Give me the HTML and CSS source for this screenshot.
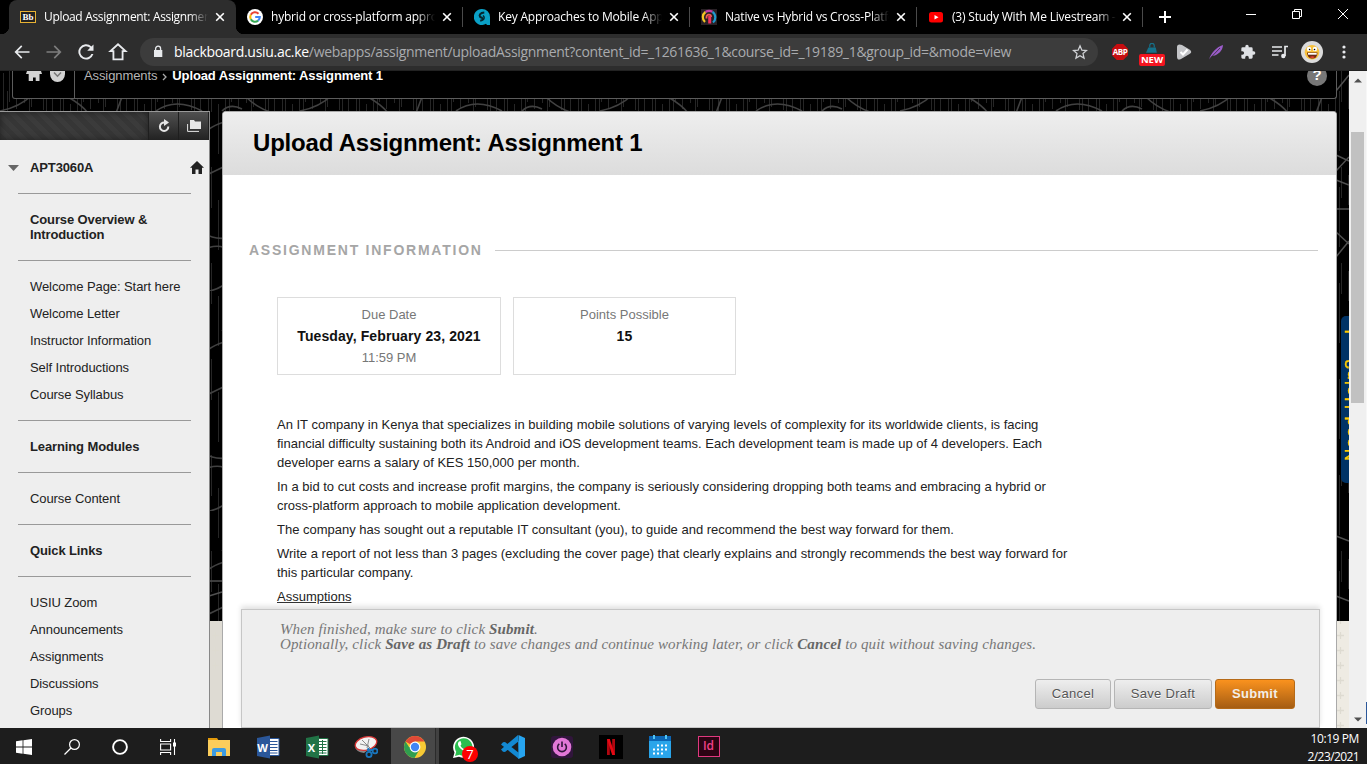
FILE: index.html
```html
<!DOCTYPE html>
<html lang="en">
<head>
<meta charset="utf-8">
<title>Upload Assignment: Assignment 1</title>
<link rel="stylesheet" href="styles.css">
</head>
<body>
<div class="tabstrip">
  <div class="tab active">
    <span class="bb">Bb</span><span class="tab-title t1">Upload Assignment: Assignment 1</span>
    <svg class="x" viewBox="0 0 10 10"><path d="M1.2 1.2l7.6 7.6M8.8 1.2l-7.6 7.6"/></svg>
  </div>
  <div class="tab">
    <svg class="fav" viewBox="0 0 16 16"><circle cx="8" cy="8" r="8" fill="#fff"/><g fill="none" stroke-width="2.1"><path d="M11.5 4.7A4.8 4.8 0 0 0 3.8 5.7" stroke="#ea4335"/><path d="M3.8 5.7a4.8 4.8 0 0 0 0 4.6" stroke="#fbbc05"/><path d="M3.8 10.3a4.8 4.8 0 0 0 7.3 1.3" stroke="#34a853"/><path d="M11.1 11.6A4.7 4.7 0 0 0 12.8 8H8.2" stroke="#4285f4"/></g></svg>
    <span class="tab-title t2">hybrid or cross-platform approach</span>
    <svg class="x" viewBox="0 0 10 10"><path d="M1.2 1.2l7.6 7.6M8.8 1.2l-7.6 7.6"/></svg>
  </div>
  <div class="tab">
    <svg class="fav" viewBox="0 0 16 16"><path d="M8 0a8 8 0 1 0 4 14.8L13 16h3V8A8 8 0 0 0 8 0z" fill="#0aa0c6"/><path d="M10.300 3.500C6 3.800 5 6 6 7.600c.6 1 2.600.9 2.700 2.200.1 1.200-1 1.700-2.500 2" fill="none" stroke="#05252e" stroke-width="2"/><path d="M9 6.500q2.300 2 0 4.500" fill="none" stroke="#05252e" stroke-width="1.500"/></svg>
    <span class="tab-title t3">Key Approaches to Mobile App Dev</span>
    <svg class="x" viewBox="0 0 10 10"><path d="M1.2 1.2l7.6 7.6M8.8 1.2l-7.6 7.6"/></svg>
  </div>
  <div class="tab">
    <svg class="fav" viewBox="0 0 16 16"><path fill="#292126" d="M0 0h16v16H0z"/><g fill="none" stroke-width="2.2"><path d="M4 13C.8 10 1.200 5.500 4.500 3" stroke="#f5c623"/><path d="M4.500 3C6.500 1.600 9.500 1.600 11.500 2.800" stroke="#c03fa4"/><path d="M11.500 2.800C15.300 5.500 15 11 12 13.500" stroke="#1f9bd1"/><path d="M5.500 9.500V8a2.300 2.300 0 0 1 4.600 0" stroke="#f25b52" stroke-width="1.800"/><path d="M8.700 7v7.500" stroke="#f0305e" stroke-width="3"/></g></svg>
    <span class="tab-title t4">Native vs Hybrid vs Cross-Platform</span>
    <svg class="x" viewBox="0 0 10 10"><path d="M1.2 1.2l7.6 7.6M8.8 1.2l-7.6 7.6"/></svg>
  </div>
  <div class="tab last">
    <svg class="fav" viewBox="0 0 16 16"><rect x="1" y="3" width="14" height="10.500" rx="2.500" fill="#f00"/><path d="M6.500 6l4 2.200-4 2.200z" fill="#fff"/></svg>
    <span class="tab-title t5">(3) Study With Me Livestream - Y</span>
    <svg class="x" viewBox="0 0 10 10"><path d="M1.2 1.2l7.6 7.6M8.8 1.2l-7.6 7.6"/></svg>
  </div>
  <svg class="plus" viewBox="0 0 12 12"><path d="M6 0v12M0 6h12"/></svg>
  <div class="winctl">
    <svg viewBox="0 0 12 12"><path d="M1 6.500h10"/></svg>
    <svg viewBox="0 0 12 12"><path d="M1.500 3.500h7v7h-7zM3.500 3.500v-2h7v7h-2"/></svg>
    <svg viewBox="0 0 12 12"><path d="M1 1l10 10M11 1L1 11"/></svg>
  </div>
</div>
<div class="toolbar">
  <div class="nav">
    <svg viewBox="0 0 24 24"><path fill="#e8eaed" d="M21 11H6.800l5.600-5.600L11 4l-8 8 8 8 1.400-1.400L6.800 13H21z"/></svg>
    <svg viewBox="0 0 24 24"><path fill="#7d7d7d" d="M3 11h14.200l-5.600-5.600L13 4l8 8-8 8-1.400-1.400 5.600-5.600H3z"/></svg>
    <svg viewBox="0 0 24 24"><path fill="#e8eaed" d="M18.500 5.300A9.200 9.200 0 1 0 20.900 14.500H18.500a6.900 6.900 0 1 1-1.600-7.500L13.500 10.500H21V3z"/></svg>
    <svg viewBox="0 0 24 24"><path fill="none" stroke="#e8eaed" stroke-width="2.200" d="M6.500 11v9.800h11V11H21L12 2.800 3 11z"/></svg>
  </div>
  <div class="omnibox">
    <svg class="lock" viewBox="0 0 10 14"><path fill="#e8eaed" d="M1 5h8.300v7H1z"/><path fill="none" stroke="#e8eaed" stroke-width="1.300" d="M2.600 5.500V3.700a2.500 2.500 0 0 1 5 0v1.800"/></svg>
    <span class="url"><b>blackboard.usiu.ac.ke</b>/webapps/assignment/uploadAssignment?content_id=_1261636_1&amp;course_id=_19189_1&amp;group_id=&amp;mode=view</span>
    <svg class="star" viewBox="0 0 24 24"><path fill="none" stroke="#d0d2d5" stroke-width="1.900" d="M12 2.800l2.800 6.400 7 .6-5.300 4.600 1.600 6.800-6.100-3.600-6.100 3.600 1.600-6.800L2.200 9.800l7-.6z"/></svg>
  </div>
  <div class="exts">
    <div class="ext"><span class="abp">ABP</span></div>
    <div class="ext new"><svg viewBox="0 0 16 16"><path d="M3 6h10l1.500 7H0z" fill="#16718a"/><path d="M5 6V3.500a2.500 2.500 0 0 1 6 0V6" fill="none" stroke="#16718a" stroke-width="1.600"/></svg><span>NEW</span></div>
    <div class="ext"><svg viewBox="0 0 16 16"><path d="M3.500.5Q1 .5 1 3v9.500Q1 17 5 15l8.500-5Q17 8 13.500 5.500L6 1Q5 .5 3.500.5z" fill="#c4c5c8"/><path d="M4.500 8l2.500 2.500 4.500-5" fill="none" stroke="#fff" stroke-width="2"/></svg></div>
    <div class="ext"><svg viewBox="0 0 16 16"><path d="M1 15.500c2-6 7-12.500 14-14.500-.2 4-2.500 8-8 10.500L4 12z" fill="#9a5cc8"/><path d="M1 15.500L12 4" stroke="#2d2d2d" stroke-width=".8"/></svg></div>
    <div class="ext"><svg viewBox="0 0 24 24"><path fill="#dfe1e5" d="M20.500 11H19V7a2 2 0 0 0-2-2h-4V3.500a2.500 2.500 0 0 0-5 0V5H4a2 2 0 0 0-2 2v3.800h1.500a2.700 2.700 0 0 1 0 5.400H2V20a2 2 0 0 0 2 2h3.800v-1.500a2.700 2.700 0 0 1 5.400 0V22H17a2 2 0 0 0 2-2v-4h1.500a2.500 2.500 0 0 0 0-5z"/></svg></div>
    <div class="ext"><svg viewBox="0 0 16 16"><path d="M0 3h10M0 7h10M0 11h6.500M16 2.500h-3V12" fill="none" stroke="#e8eaed" stroke-width="1.700"/><circle cx="11.300" cy="12" r="2.200" fill="#e8eaed"/></svg></div>
    <div class="ext"><svg class="avatar" viewBox="0 0 22 22"><circle cx="11" cy="11" r="11" fill="#dcdcdc"/><circle cx="11" cy="11.300" r="7.300" fill="#f8c23e"/><path d="M6 11.500h10.500c-.5 5-2.500 6-5.200 6s-4.800-1.500-5.300-6z" fill="#6b2a12"/><path d="M7 12h8.700v1.700H7z" fill="#fff"/><path d="M8.500 16q3-1.500 5.500 0-2.500 2-5.500 0z" fill="#e94437"/><circle cx="8" cy="8" r="2.200" fill="#fff"/><circle cx="14" cy="8" r="2.200" fill="#fff"/><circle cx="8.600" cy="8.500" r=".8"/><circle cx="13.500" cy="8.500" r=".8"/></svg></div>
    <div class="ext"><svg viewBox="0 0 16 16" fill="#e8eaed"><circle cx="8" cy="3" r="1.600"/><circle cx="8" cy="8" r="1.600"/><circle cx="8" cy="13" r="1.600"/></svg></div>
  </div>
</div>
<div class="viewport">
  <div class="site">
    <svg class="swirls" viewBox="0 0 1349 657" width="1349" height="657">
      <defs>
        <pattern id="grain" width="74" height="96" patternUnits="userSpaceOnUse"><path d="M3.500 2v55M7.500 20v60M9.500 0v31M16.500 8v30M19.500 50v40M24.500 10v22M29.500 0v68M31.500 12v24M38.500 40v50M43.500 3v36M46.500 17v30M52.500 0v50M55.500 60v34M60.500 14v27M63.500 0v41M70.500 33v50" stroke="#262626" stroke-width="1"/></pattern>
        <pattern id="curls" width="300" height="220" patternUnits="userSpaceOnUse"><g fill="none" stroke="#414141" stroke-width="1.600"><path d="M0 40Q20 36 32 24M68 26Q82 34 88 42M116 42l6-16M156 40q20-14 46 0M246 26q10 10 24 15M222 40q8-8 20-2"/><path d="M195 70c50-50 70 10 20 30s-20 90 30 60M200 180c40-20 50 30 10 40"/></g></pattern>
        <pattern id="plusses" width="15" height="15" patternUnits="userSpaceOnUse"><path d="M2 9.500h7M5.500 6v7" stroke="#dedbd1" stroke-width="1.300"/></pattern>
      </defs>
      <path fill="#000" d="M0 0h1349v550H0z"/><path fill="url(#grain)" d="M0 0h1349v550H0z"/><path fill="url(#curls)" d="M0 0h1336v550H0z"/>
      <path fill="#eeebe3" d="M0 550h1349v107H0z"/><path fill="#dedbd3" d="M209 550h13v107h-13z"/><path fill="url(#plusses)" d="M0 550h1349v50H0zM1336 550h13v107h-13z"/>
      <path d="M1336 40l13-16M1336 120l13-14M1336 104l13 6M1336 129l13 5M1336 158h13M1336 206l13-16M1336 181l13 12M1336 545l13 5M1336 485l13 5M209 545l13-4M209 530h13" transform="translate(0 -20)" stroke="#505050" stroke-width="1.500"/>
    </svg>
    <div class="crumbs">
      <div class="crumb-icons">
        <svg class="ci-home" viewBox="0 0 16 10"><path fill="#d2d2d2" d="M1 0h14l1 3h-2.500v7H9.700V6.500H7V10H2.700V3H0z"/></svg>
        <svg class="ci-down" viewBox="0 0 15 11"><path fill="#d2d2d2" d="M0 0h15v3a7.500 8 0 0 1-15 0z"/><path d="M4 1.500l3.500 3.700L11 1.500" fill="none" stroke="#777" stroke-width="1.500"/></svg>
      </div>
      <div class="crumb-text"><span class="c1">Assignments</span><svg viewBox="0 0 5 8"><path d="M1 1l3 3-3 3" fill="none" stroke="#aaa" stroke-width="1.300"/></svg><b>Upload Assignment: Assignment 1</b></div>
      <span class="help">?</span>
    </div>
    <div class="columns">
      <aside class="side">
        <div class="side-tools"><span class="stripe"></span>
          <span class="sbtn"><svg viewBox="0 0 14 14"><path d="M7.500 3.500A4.200 4.200 0 1 0 11.300 7.500" fill="none" stroke="#e6e6e6" stroke-width="2"/><path d="M7 0l5 3.500-5 3.500z" fill="#e6e6e6"/></svg></span>
          <span class="sbtn"><svg viewBox="0 0 14 14"><path d="M3 3V1h4l1 1.500h6V10H3z" fill="#e6e6e6"/><path d="M.6 5v7.400H12" fill="none" stroke="#e6e6e6"/></svg></span>
        </div>
        <div class="menu">
          <div class="course"><svg class="tri" viewBox="0 0 11 6"><path d="M0 0h11L5.500 6z" fill="#666"/></svg><b>APT3060A</b><svg class="home" viewBox="0 0 14 13"><path fill="#222" d="M7 0l7 6.800h-2V13H8.500V8.500h-3V13H2V6.800H0z"/></svg></div>
          <hr><b>Course Overview &amp;<br>Introduction</b>
          <hr><a>Welcome Page: Start here</a><a>Welcome Letter</a><a>Instructor Information</a><a>Self Introductions</a><a>Course Syllabus</a>
          <hr><b>Learning Modules</b>
          <hr><a>Course Content</a>
          <hr><b>Quick Links</b>
          <hr><a>USIU Zoom</a><a>Announcements</a><a>Assignments</a><a>Discussions</a><a>Groups</a>
        </div>
      </aside>
      <main class="panel">
        <h1><span>Upload Assignment: Assignment 1</span></h1>
        <section class="body">
          <h2><span>ASSIGNMENT INFORMATION</span></h2>
          <div class="cards">
            <div class="card"><span>Due Date</span><b>Tuesday, February 23, 2021</b><span>11:59 PM</span></div>
            <div class="card points"><span>Points Possible</span><b>15</b></div>
          </div>
          <div class="prose">
            <p>An IT company in Kenya that specializes in building mobile solutions of varying levels of complexity for its worldwide clients, is facing<br>financial difficulty sustaining both its Android and iOS development teams. Each development team is made up of 4 developers. Each<br>developer earns a salary of KES 150,000 per month.</p>
            <p>In a bid to cut costs and increase profit margins, the company is seriously considering dropping both teams and embracing a hybrid or<br>cross-platform approach to mobile application development.</p>
            <p>The company has sought out a reputable IT consultant (you), to guide and recommend the best way forward for them.</p>
            <p>Write a report of not less than 3 pages (excluding the cover page) that clearly explains and strongly recommends the best way forward for<br>this particular company.</p>
            <p><u>Assumptions</u></p>
          </div>
        </section>
        <footer class="submit-bar">
          <p class="note">When finished, make sure to click <b>Submit</b>.<br>Optionally, click <b>Save as Draft</b> to save changes and continue working later, or click <b>Cancel</b> to quit without saving changes.</p>
          <div class="buttons"><button class="cancel">Cancel</button><button class="draft">Save Draft</button><button class="submit">Submit</button></div>
        </footer>
      </main>
    </div>
    <div class="helptab"><span>Need Help?</span><span>I</span></div>
  </div>
  <div class="scrollbar">
    <svg viewBox="0 0 8 5"><path d="M0 4.500L4 .5l4 4z" fill="#505050"/></svg>
    <div class="track"><div class="thumb"></div></div>
    <svg viewBox="0 0 8 5"><path d="M0 .5l4 4 4-4z" fill="#505050"/></svg>
  </div>
  <div class="edge"><i></i></div>
</div>
<div class="taskbar">
  <div class="sys">
    <span><svg viewBox="0 0 16 16" fill="#fff"><path d="M0 2.200l6.600-.9v6.300H0zM7.400 1.200L16 0v7.600H7.400zM0 8.400h6.600v6.300L0 13.800zM7.400 8.400H16V16l-8.600-1.200z"/></svg></span>
    <span><svg viewBox="0 0 16 16" fill="none" stroke="#fff" stroke-width="1.200"><circle cx="10.500" cy="5.500" r="4.900"/><path d="M7 9L.5 15.500"/></svg></span>
    <span><svg viewBox="0 0 16 16"><circle cx="8" cy="8" r="6.900" fill="none" stroke="#fff" stroke-width="1.900"/></svg></span>
    <span><svg viewBox="0 0 16 16" fill="none" stroke="#fff" stroke-width="1.100"><path d="M.6 0v2.500h10V0M.6 16v-2.500h10V16M.6 5h10v6H.6zM14.500 0v16"/><path d="M14.500 3.500v4" stroke-width="3"/></svg></span>
  </div>
  <div class="apps">
    <span><svg viewBox="0 0 24 24"><path fill="#e39a0b" d="M1 3h9l2 3H1z"/><path fill="#fbcd5b" d="M1 5h22v16H1z"/><path fill="#3d9be0" d="M5 21v-6q0-2 2-2h10q2 0 2 2v6h-4v-4H9v4z"/></svg></span>
    <span class="office"><svg viewBox="0 0 24 24"><path fill="#fff" d="M12 4h11v16H12z"/><path d="M14 6.500h7.500M14 9.500h7.500M14 12.500h7.500M14 15.500h7.500M14 18h7.500" stroke="#2b579a"/><path d="M13 3.500h10v17H13" fill="none" stroke="#2b579a"/><path fill="#2b579a" d="M1 3l13-2.500v23L1 21z"/></svg><em>W</em></span>
    <span class="office"><svg viewBox="0 0 24 24"><path fill="#fff" d="M12 4h11v16H12z"/><path d="M14 6.500h7.500M14 9.500h7.500M14 12.500h7.500M14 15.500h7.500M14 18h7.500M17.500 5v14" stroke="#217346"/><path d="M13 3.500h10v17H13" fill="none" stroke="#217346"/><path fill="#217346" d="M1 3l13-2.500v23L1 21z"/></svg><em>X</em></span>
    <span><svg viewBox="0 0 24 24"><path d="M1 12q1 5 9 6l4-3z" fill="#888"/><ellipse cx="12" cy="8.500" rx="11" ry="6.500" transform="rotate(-15 12 8.500)" fill="#f3f3f3" stroke="#d83636" stroke-width="1.300"/><path d="M8 5l8 8M15 4l-2 9M6 9l9 2" fill="none" stroke="#8a8a8a"/><g fill="none" stroke="#1976bd" stroke-width="1.800"><circle cx="15" cy="19.500" r="2.600"/><circle cx="21" cy="16" r="2.400"/><path d="M14 13l2 4M13 15h6"/></g></svg></span>
    <span class="running"><svg viewBox="0 0 24 24"><circle cx="12" cy="12" r="11" fill="#f7c934"/><path d="M12 12L2.500 6.500A11 11 0 0 1 21.500 6.500H12z" fill="#df4937"/><path d="M2.500 6.500A11 11 0 0 0 11.500 23l5-8.500L12 12H6z" fill="#2f9e4f"/><circle cx="12" cy="12" r="5.400" fill="#fff"/><circle cx="12" cy="12" r="4.200" fill="#4285f4"/></svg></span>
    <span class="wa"><svg viewBox="0 0 24 24"><path d="M2 23l1.500-5.500A10.500 10.500 0 1 1 8 21.700z" fill="#fff"/><path d="M4 21l1.200-4.300A8.800 8.800 0 1 1 8.500 19.800z" fill="#2bbf4f"/><path d="M8 6.500c-2 2-1 5 2 7.500s6 3 7 1l-2.500-2-1.500 1c-2-1-3-2-3.500-3.500l1-1.200L9.500 6z" fill="#fff"/></svg><em>7</em></span>
    <span><svg viewBox="0 0 24 24"><path fill="#1389d2" d="M17 0l1 24L0 9.500 2 7.200 4 7l14 11V6L4 17l-2-.2L0 14.500z"/><path fill="#27a5f0" d="M17.500 0L24 3v18l-6.500 3z"/></svg></span>
    <span><svg viewBox="0 0 24 24"><rect x="1" y="1" width="22" height="22" rx="3" fill="#31153c"/><circle cx="12" cy="12" r="9.300" fill="#e277d7"/><path d="M9.300 8.800a4.400 4.400 0 1 0 5.400 0M12 6.500V12" fill="none" stroke="#31153c" stroke-width="1.600"/></svg></span>
    <span><svg viewBox="0 0 24 24"><path d="M0 0h24v24H0z"/><path fill="#b1060f" d="M8 4h2.800v16H8zM13.200 4H16v16h-2.800z"/><path fill="#e50914" d="M8 4h2.800L16 20h-2.800z"/></svg></span>
    <span><svg viewBox="0 0 24 24"><path fill="#2aa5ea" d="M1 3h22v20H1z"/><path fill="#0c66b4" d="M1 1h22v5H1z"/><path d="M6 0v4M18 0v4" stroke="#50c5f4" stroke-width="2"/><path d="M9 10.500h11M5 14.500h15M5 18.500h11" stroke="#fff" stroke-width="2" stroke-dasharray="2 2"/></svg></span>
    <span><em class="ind">Id</em></span>
  </div>
  <div class="clock"><span>10:19 PM</span><span class="date">2/23/2021</span></div>
</div>
</body>
</html>
```
FILE: styles.css
```css
*{box-sizing:border-box}
body{margin:0;width:1367px;height:764px;overflow:hidden;display:flex;flex-direction:column;background:#000;font-family:Arial,"Liberation Sans",sans-serif;font-size:13px}
svg{display:block;flex:none}

.tabstrip{height:34px;display:flex;padding-left:9px;background:#000;flex:none}
.tab{position:relative;width:227px;height:34px;display:flex;align-items:center;padding-left:11px;flex:none}
.tab:not(.active){background:linear-gradient(#4a4a4a,#4a4a4a) no-repeat 226px 7px/1px 20px}
.tab.last{width:226px;background-position-x:225px}
.tab.last .x{margin-left:6px}
.tab.active{background:#2d2d2d;border-radius:8px 8px 0 0}
.tab.active::before,.tab.active::after{content:"";position:absolute;bottom:0;width:8px;height:8px}
.tab.active::before{left:-8px;background:radial-gradient(circle at 0 0,#000 8px,#2d2d2d 8.5px)}
.tab.active::after{right:-8px;background:radial-gradient(circle at 100% 0,#000 8px,#2d2d2d 8.5px)}
.fav{width:16px;height:16px}
.bb{width:16px;height:12px;border:1px solid #e8b233;background:#222;color:#fff;font:bold 9px/10px "Liberation Serif",serif;text-align:center;flex:none}
.tab-title{margin-left:8px;width:164px;overflow:hidden;white-space:nowrap;color:#fff;font:12px/18px "Segoe UI","Open Sans",sans-serif;letter-spacing:-.2px;-webkit-mask:linear-gradient(90deg,#000 145px,transparent 164px)}
.t1{letter-spacing:-.33px}
.x{width:10px;height:10px;margin-left:7px;fill:none;stroke:#fff;stroke-width:1.6}
.plus{width:12px;height:12px;margin:11px 0 0 16px;stroke:#fff;stroke-width:2}
.winctl{margin-left:auto;display:flex;gap:34px;padding:8px 18px 0 0}
.winctl svg{width:12px;height:12px;fill:none;stroke:#fff;stroke-width:1}

.toolbar{height:37px;background:#2d2d2d;border-bottom:1px solid #222;display:flex;align-items:center;flex:none}
.nav{display:flex;gap:12px;padding-left:12px}
.nav svg{width:20px;height:20px}
.omnibox{margin-left:12px;width:958px;height:28px;border-radius:14px;background:#3c3c3c;display:flex;align-items:center;padding-left:13px}
.lock{width:10px;height:14px}
.url{margin-left:11px;width:898px;white-space:nowrap;color:#a9abae;font:14px/20px "Segoe UI","Open Sans",sans-serif;letter-spacing:-.3px}
.url b{font-weight:400;color:#fff}
.star{width:16px;height:16px}
.exts{display:flex;margin-left:6px}
.ext{width:32px;height:28px;display:flex;align-items:center;justify-content:center}
.ext svg{width:16px;height:16px}
.ext .avatar{width:22px;height:22px}
.abp{width:16px;height:16px;background:#c70d10;clip-path:polygon(30% 0,70% 0,100% 30%,100% 70%,70% 100%,30% 100%,0 70%,0 30%);color:#fff;font:bold 8px/16px "Open Sans",sans-serif;letter-spacing:-.5px;text-align:center}
.new{flex-direction:column;justify-content:flex-start}
.new svg{margin-top:5px;height:12px}
.new span{margin-top:-1px;width:26px;height:12px;border-radius:2px;background:#f41420;color:#fff;font:bold 9.5px/12px "Open Sans",sans-serif;text-align:center;flex:none}

.viewport{height:657px;display:flex;flex:none}
.site{position:relative;width:1349px;height:657px;overflow:hidden;flex:none}
.swirls{position:absolute;inset:0}
.crumbs{position:relative;margin-left:12px;width:1325px;height:28px;background:#000;border:1px solid #5c5c5c;border-top:0;border-radius:0 0 3px 3px;display:flex}
.crumb-icons{width:62px;border-right:1px solid #5c5c5c;display:flex;gap:8px;padding-left:13px}
.ci-home{width:16px;height:10px}
.ci-down{width:15px;height:11px}
.crumb-text{display:flex;align-items:flex-start;padding-left:9px;line-height:15px;margin-top:-3px;color:#fff;white-space:nowrap}
.crumb-text b{letter-spacing:-.12px}
.c1{color:#b5b5b5;letter-spacing:-.1px}
.crumb-text svg{width:5px;height:8px;margin:5px 5px 0}
.help{margin:-5px 9px 0 auto;width:20px;height:20px;border-radius:50%;background:#777;color:#fff;font:bold 15px/18px "Liberation Sans",sans-serif;text-align:center}
.columns{position:relative;display:flex;margin-top:12px;height:617px}
.side{width:210px;background:#eee;border-top:1px solid #999;border-right:1px solid #888;flex:none;margin-right:12px}
.side-tools{height:28px;display:flex;background:#1e1e1e}
.stripe{width:148px;background:repeating-linear-gradient(45deg,#363636 0 5px,#3b3b3b 5px 10px);box-shadow:inset 0 0 7px #222}
.sbtn{width:29px;margin-left:1px;background:linear-gradient(#505050,#222);display:flex;align-items:center;justify-content:center}
.sbtn svg{width:14px;height:14px}
.menu{padding:14px 18px 0;display:flex;flex-direction:column;color:#222;line-height:15px;letter-spacing:-.08px}
.menu a,.menu b{padding:6px 0 6px 12px;white-space:nowrap}
.menu b{letter-spacing:-.12px}
.menu hr{width:173px;height:1px;border:0;background:#999;margin:12px 0}
.course{display:flex;align-items:center;margin:0 -13px 0 -10px}
.menu .course b{padding-left:11px}
.tri{width:11px;height:6px}
.home{width:14px;height:13px;margin-left:auto}
.panel{width:1115px;background:#fff;border:1px solid #aaa;border-bottom:0;border-radius:4px 4px 0 0;display:flex;flex-direction:column;overflow:hidden}
h1{margin:0;height:63px;padding-left:30px;background:linear-gradient(#eee,#dcdcdc);color:#000;font-size:24px;line-height:62px;letter-spacing:-.2px;flex:none}
.body{height:434px;padding:65px 18px 0 26px;overflow:hidden;flex:none}
h2{margin:0;display:flex;align-items:center;gap:12px;color:#a6a6a6;font-size:14px;line-height:20px;letter-spacing:1.76px}
h2::after{content:"";height:1px;background:#ccc;flex:1}
.cards{display:flex;gap:12px;padding:37px 0 0 28px}
.card{width:224px;height:78px;border:1px solid #ddd;display:flex;flex-direction:column;align-items:center;padding-top:6px;line-height:21.5px;color:#777}
.points{width:223px}
.card b{color:#111;font-size:14px;letter-spacing:.1px}
.prose{padding:40px 0 0 28px;color:#222;line-height:19px;white-space:nowrap}
.prose p{margin:0 0 5px}
.submit-bar{height:119px;margin:0 16px 0 18px;background:#eee;border:1px solid #c6c6c6;box-shadow:0 -3px 5px #e2e2e2;position:relative;padding:12px 24px 0 38px;flex:none}
.note{margin:0;color:#777;font:italic 15px/15px Georgia,"Liberation Serif",serif;letter-spacing:.125px;white-space:nowrap}
.note b{color:#666}
.buttons{display:flex;justify-content:flex-end;gap:3px;margin-top:27px}
button{height:30px;padding:0;border:1px solid #b5b5b5;border-radius:3px;background:linear-gradient(#eee,#ccc);color:#555;font:13px/26px Arial,"Liberation Sans",sans-serif;letter-spacing:.3px;text-shadow:0 1px #fff}
.cancel{width:76px}
.draft{width:98px}
.submit{width:80px;border-color:#b56a18;background:linear-gradient(#fa921e,#a55d13);color:#f3eee8;font-weight:700;text-shadow:none}
.helptab{position:absolute;left:1341px;top:245px;width:40px;height:167px;background:#036;color:#fc0;writing-mode:vertical-rl;transform:rotate(180deg);border-radius:0 5px 5px 0;font-size:17px;line-height:22px;letter-spacing:1.3px;display:flex;gap:24px;padding:22px 0 0 16px;-webkit-text-stroke:.4px #fc0}

.scrollbar{width:17px;background:#f0f0f0;display:flex;flex-direction:column;align-items:center;padding:7px 0 6px}
.scrollbar svg{width:8px;height:5px}
.track{flex:1;padding-top:49px}
.thumb{width:13px;height:271px;background:#c1c1c1}
.edge{width:1px;background:#f7f7f7;padding-top:631px}
.edge i{display:block;height:22px;background:#2b579a}

.taskbar{height:36px;background:#1d1d1d;display:flex;flex:none}
.sys,.apps{display:flex}
.apps{margin-left:2px}
.sys span,.apps span{position:relative;height:36px;display:flex;align-items:center;justify-content:center;padding-top:2px}
.sys span{width:48px}
.apps span{width:49px}
.sys svg{width:16px;height:16px}
.apps svg{width:24px;height:24px}
em{font-style:normal}
.apps .running{background:linear-gradient(90deg,transparent 1px,#484848 1px 45px,#2b2b2b 45px 46px,#414141 46px)}
.office em{position:absolute;left:13px;top:12px;width:13px;color:#fff;font:bold 11px/16px "Open Sans",sans-serif;text-align:center}
.apps .wa{padding-right:2px}
.wa em{position:absolute;left:23px;top:18px;width:16px;height:16px;border-radius:50%;background:#f00;color:#fff;font:13px/16px "Open Sans",sans-serif;text-align:center}
.ind{width:22px;height:21px;margin-top:-1px;border:1.5px solid #e0387f;background:#2b0414;color:#f0418a;font:600 12px/18px "Open Sans",sans-serif;text-align:center}
.clock{margin-left:auto;width:70px;padding:2px 8px 0 0;color:#fff;font:12px/18px "Segoe UI","Open Sans",sans-serif;text-align:right;display:flex;flex-direction:column;letter-spacing:-.4px;white-space:nowrap}
.date{letter-spacing:-.6px}
```
